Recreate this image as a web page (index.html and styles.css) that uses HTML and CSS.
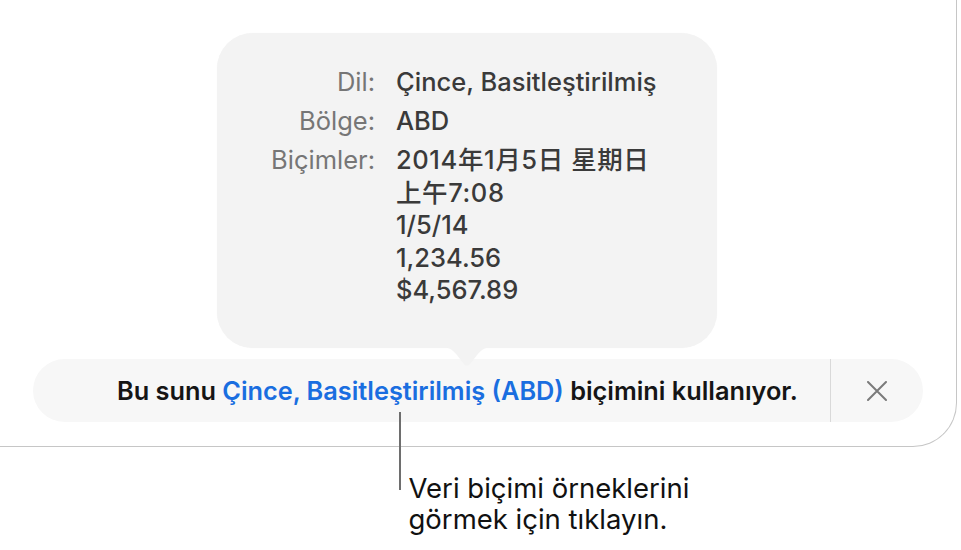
FILE: index.html
```html
<!DOCTYPE html>
<html lang="tr">
<head>
<meta charset="utf-8">
<link rel="stylesheet" href="styles.css">
</head>
<body>
<div class="window">
  <div class="popover">
    <div class="grid">
      <div class="label">Dil:</div>
      <div class="value">Çince, Basitleştirilmiş</div>
      <div class="label">Bölge:</div>
      <div class="value">ABD</div>
      <div class="label">Biçimler:</div>
      <div class="value">
        <div class="cjk">2014年1月5日 星期日</div>
        <div class="cjk">上午7:08</div>
        <div>1/5/14</div>
        <div>1,234.56</div>
        <div>$4,567.89</div>
      </div>
    </div>
    <svg class="arrow" width="52" height="21" viewBox="0 0 52 21"><path d="M0 0 H52 C45 0 41 2 36 8 L29.5 16.5 Q26 21 22.5 16.5 L16 8 C11 2 7 0 0 0 Z" fill="#f3f3f3"/></svg>
  </div>
  <div class="bar">
    <div class="msg"><span>Bu sunu <span class="link">Çince, Basitleştirilmiş (ABD)</span> biçimini kullanıyor.</span></div>
    <div class="divider"></div>
    <div class="close">
      <svg width="20" height="20" viewBox="0 0 20 20"><path d="M1 1 L19 19 M19 1 L1 19" stroke="#7b7b7b" stroke-width="2" stroke-linecap="round" fill="none"/></svg>
    </div>
  </div>
</div>
<div class="callout">
  <div class="pointer"></div>
  <div class="caption">Veri biçimi örneklerini<br>görmek için tıklayın.</div>
</div>
</body>
</html>
```
FILE: styles.css
```css
html, body {
  margin: 0;
  padding: 0;
  background: #ffffff;
}
body {
  font-family: Inter, "Noto Sans CJK SC", sans-serif;
  width: 961px;
  height: 550px;
  overflow: hidden;
}
.window {
  box-sizing: border-box;
  width: 956.5px;
  height: 447px;
  border-right: 1.5px solid #c6c6c6;
  border-bottom: 1.5px solid #c6c6c6;
  border-bottom-right-radius: 44px;
  padding-top: 33px;
  display: flex;
  flex-direction: column;
}
.popover {
  position: relative;
  z-index: 2;
  box-sizing: border-box;
  margin-left: 217px;
  width: 500px;
  height: 315px;
  background: #f3f3f3;
  border-radius: 36px;
  box-shadow: 0 0 1px rgba(0,0,0,0.06);
  padding-top: 33px;
}
.grid {
  display: grid;
  grid-template-columns: 158px auto;
  column-gap: 21px;
  row-gap: 6.5px;
  font-size: 25.5px;
  line-height: 32.5px;
}
.label {
  text-align: right;
  color: #767676;
}
.value {
  color: #3a3a3a;
  font-weight: 500;
}
.cjk {
  letter-spacing: 0.6px;
}
.arrow {
  position: absolute;
  left: 224px;
  top: 314px;
}
.bar {
  margin-top: 11px;
  margin-left: 33px;
  width: 890px;
  height: 63px;
  background: #f7f7f7;
  border-radius: 32px;
  display: flex;
  align-items: stretch;
}
.msg {
  flex: 1;
  padding-left: 84px;
  font-size: 25.3px;
  line-height: 63px;
  font-weight: 600;
  color: #151515;
  white-space: nowrap;
}
.link {
  color: #1a6ee0;
}
.divider {
  width: 1.5px;
  background: #d9d9d9;
}
.close {
  width: 92px;
  display: flex;
  align-items: center;
  justify-content: center;
}
.callout {
  position: relative;
  margin-left: 398.5px;
  margin-top: 25.5px;
  display: flex;
}
.pointer {
  position: absolute;
  left: 0;
  top: -60.5px;
  width: 2px;
  height: 78px;
  background: #6e6e6e;
}
.caption {
  margin-left: 10px;
  font-size: 27.5px;
  line-height: 31px;
  color: #111111;
}
```
